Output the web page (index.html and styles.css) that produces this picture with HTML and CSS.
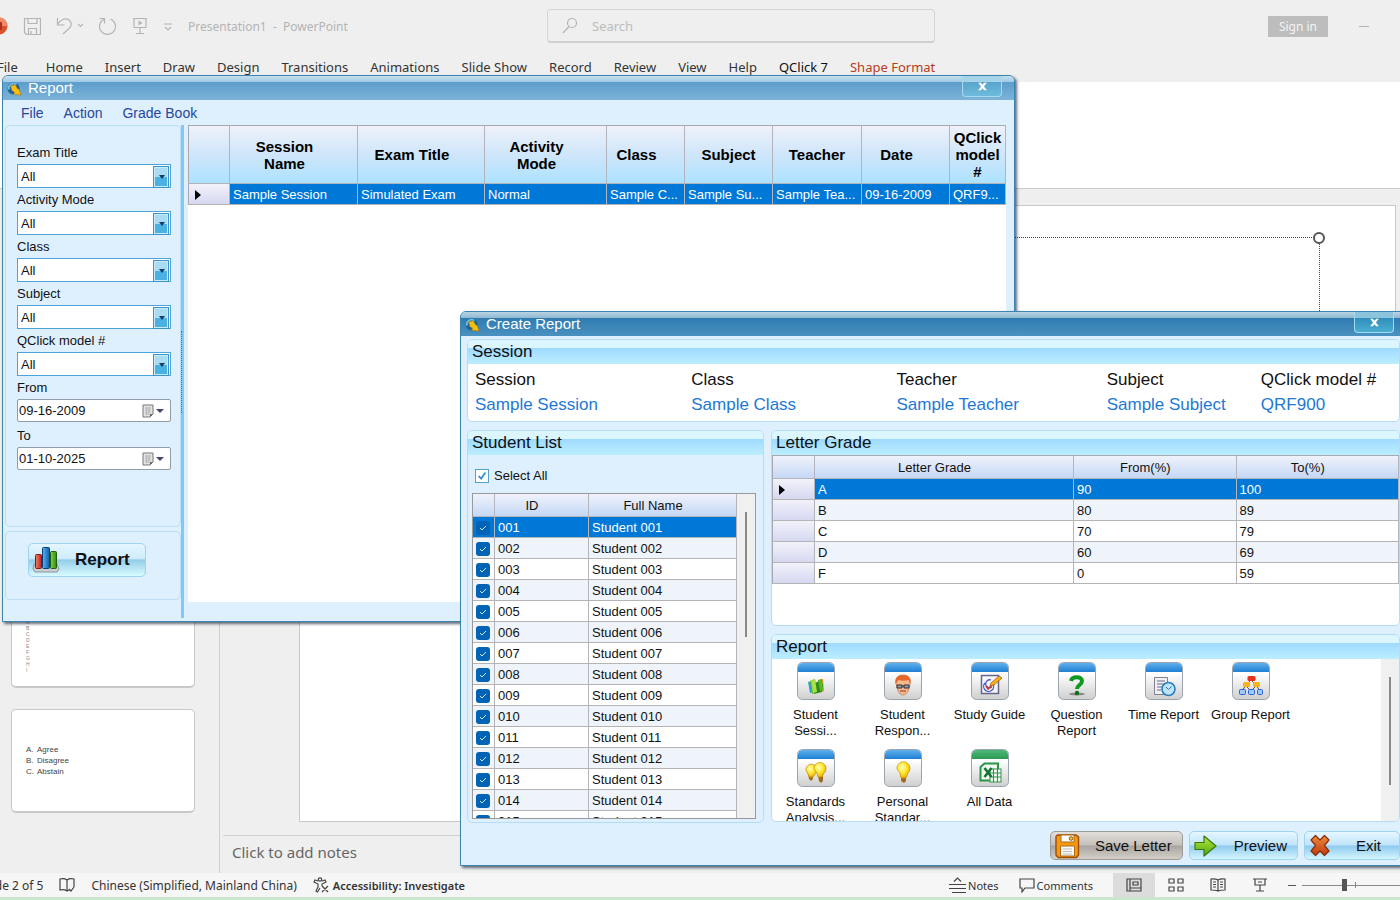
FILE: index.html
```html
<!DOCTYPE html>
<html lang="en">
<head>
    <meta charset="UTF-8">
    <meta name="viewport" content="width=device-width, initial-scale=1.0">
    <title>Create Report</title>
    <link rel="stylesheet" href="styles.css">
</head>
<body>

    <!-- shared icon parts -->
    <svg width="0" height="0" class="defs" aria-hidden="true">
        <defs>
            <linearGradient id="blue-top" x1="0" y1="0" x2="0" y2="1"><stop offset="0" stop-color="#5fb0ee"/><stop offset="1" stop-color="#1f7fd2"/></linearGradient>
            <linearGradient id="green-top" x1="0" y1="0" x2="0" y2="1"><stop offset="0" stop-color="#4fb878"/><stop offset="1" stop-color="#2b9a55"/></linearGradient>
            <linearGradient id="tile" x1="0" y1="0" x2="0" y2="1"><stop offset="0.3" stop-color="#ffffff"/><stop offset="1" stop-color="#cfcfcf"/></linearGradient>
            <linearGradient id="red-bar"><stop offset="0" stop-color="#f0806c"/><stop offset="1" stop-color="#b8261a"/></linearGradient>
            <linearGradient id="blue-bar"><stop offset="0" stop-color="#5ab4f4"/><stop offset="1" stop-color="#0f5cae"/></linearGradient>
            <linearGradient id="green-bar"><stop offset="0" stop-color="#8ad04c"/><stop offset="1" stop-color="#2c8812"/></linearGradient>
            <linearGradient id="arrow-fill" x1="0" y1="0" x2="0" y2="1"><stop offset="0" stop-color="#b9ec3c"/><stop offset="1" stop-color="#4fa512"/></linearGradient>
            <linearGradient id="exit-fill" x1="0" y1="0" x2="0" y2="1"><stop offset="0" stop-color="#f08a3c"/><stop offset="1" stop-color="#bf3c10"/></linearGradient>
            <radialGradient id="bulb" cx="0.4" cy="0.35" r="0.7"><stop offset="0" stop-color="#fffbc0"/><stop offset="0.5" stop-color="#ffe92e"/><stop offset="1" stop-color="#f0a800"/></radialGradient>
            <symbol id="app" viewBox="0 0 16 16">
                <circle cx="7" cy="8" r="6.5" fill="#1f6496"/>
                <path d="M2 9a5 5 0 0 1 8-5" fill="none" stroke="#6cc0e8" stroke-width="2"/>
                <path d="M4 5l5-1 2 4 2 1 2 6-8-1 1-2-3-2z" fill="#f6bf12" stroke="#a87408" stroke-width="0.6"/>
            </symbol>
            <symbol id="close" viewBox="0 0 10 10"><path d="M1 1.500h2.500L5 3.500l1.500-2H9L6.300 5 9 8.500H6.500L5 6.500l-1.500 2H1L3.700 5z" fill="#fff"/></symbol>
            <symbol id="calendar" viewBox="0 0 12 14">
                <path d="M1 1h10v9l-3 3H1z" fill="#e4e4e4" stroke="#777"/>
                <path d="M3 4h6M3 6h6M3 8h6M3 10h4M4.500 3v8M7 3v8" stroke="#aaa" stroke-width="0.7"/>
                <path d="M11 10H8v3z" fill="#666"/>
            </symbol>
            <symbol id="tile-blue" viewBox="0 0 38 38">
                <rect x="0.500" y="0.500" width="37" height="37" rx="5" fill="url(#tile)" stroke="#9aa4ae"/>
                <path d="M1 10V5.500A4.500 4.500 0 0 1 5.500 1h27A4.500 4.500 0 0 1 37 5.500V10z" fill="url(#blue-top)"/>
            </symbol>
        </defs>
    </svg>

    <div class="powerpoint">
        <header class="titlebar">
            <div class="quick-access">
                <svg class="logo" width="17" height="18" viewBox="0 0 17 18"><circle cx="8" cy="9" r="8.500" fill="#d9532c"/><path d="M8 .5a8.500 8.500 0 0 1 8.500 8.500H8z" fill="#f08a68"/><rect x="2" y="5" width="9" height="8" rx="1" fill="#a9321a"/></svg>
                <svg width="18" height="18" viewBox="0 0 18 18"><path d="M1.500 1.500h16v16h-14l-2-2zM5 1.500v5h9v-5M5.500 17.500v-6h8v6M8 17v-3" class="ink-pale"/></svg>
                <svg width="28" height="18" viewBox="0 0 28 18"><path d="M1.500 1v7h7M1.500 7.500C5 2 10 .5 13 3s3 6 0 8.500L7 17" class="ink-pale"/><path d="M22 7l2.500 2.500L27 7" class="ink-pale"/></svg>
                <svg width="18" height="18" viewBox="0 0 18 18"><path d="M0.500 1.500h5v5M5.500 2a8 8 0 1 0 6 0" class="ink-pale"/></svg>
                <svg width="16" height="18" viewBox="0 0 16 18"><path d="M1 1.500h14M2 1.500v9h12v-9M8 10.500v6M4 16.500h8" class="ink-pale"/><path d="M6.500 3.500v5l4-2.500z" fill="#b4b4b4"/></svg>
                <svg width="10" height="18" viewBox="0 0 10 18"><path d="M1 7h8M2 10l3 3 3-3" class="ink-pale"/></svg>
                <span class="doc-name">Presentation1 &nbsp;-&nbsp; PowerPoint</span>
            </div>
            <label class="search">
                <svg width="16" height="17" viewBox="0 0 16 17"><circle cx="10" cy="6" r="4.500" class="ink-pale"/><path d="M7 9.500L1 16" class="ink-pale"/></svg>
                <input type="text" placeholder="Search" aria-label="Search">
            </label>
            <div class="account">
                <button type="button" class="sign-in">Sign in</button>
                <button type="button" class="minimize" aria-label="Minimize"></button>
            </div>
        </header>

        <nav class="ribbon-tabs">
            <a href="#" class="file-tab">File</a>
            <a href="#">Home</a>
            <a href="#">Insert</a>
            <a href="#">Draw</a>
            <a href="#">Design</a>
            <a href="#">Transitions</a>
            <a href="#">Animations</a>
            <a href="#">Slide Show</a>
            <a href="#">Record</a>
            <a href="#">Review</a>
            <a href="#">View</a>
            <a href="#">Help</a>
            <a href="#" class="current">QClick 7</a>
            <a href="#" class="contextual">Shape Format</a>
        </nav>
        <div class="ribbon"></div>

        <div class="workspace">
            <div class="thumbnails">
                <div class="thumb">
                    <ul class="tiny">
                        <li>A</li><li>B</li><li>C</li><li>D</li><li>E</li><li>F</li><li>G</li><li>H</li><li>I</li>
                    </ul>
                </div>
                <div class="thumb">
                    <ul>
                        <li><span>A.</span>Agree</li>
                        <li><span>B.</span>Disagree</li>
                        <li><span>C.</span>Abstain</li>
                    </ul>
                </div>
            </div>
            <div class="editor">
                <div class="slide">
                    <div class="placeholder"><span class="handle"></span></div>
                </div>
                <div class="notes">Click to add notes</div>
            </div>
        </div>

        <footer class="statusbar">
            <div class="status-left">
                <span class="slide-count">Slide 2 of 5</span>
                <svg width="16" height="16" viewBox="0 0 16 16"><path d="M8 3C6 1.500 3 1.500 1 2v11c2-.5 5-.5 7 1 1-.8 2-1 3-1M8 3c2-1.500 5-1.500 7-1v8M8 3v11M10 12l2 2 3-4" class="ink"/></svg>
                <span class="language">Chinese (Simplified, Mainland China)</span>
                <span class="access"><svg width="16" height="16" viewBox="0 0 16 16"><circle cx="7" cy="2.500" r="1.700" class="ink"/><path d="M5 4L2 3 1 5l4 2v3l-2 4 1.500 1L7 11M9 4l3-1 1 2-4 2v2M9 9l6 6M15 9l-6 6" class="ink"/></svg><b>Accessibility: Investigate</b></span>
            </div>
            <div class="status-right">
                <button type="button" class="status-btn"><svg width="17" height="17" viewBox="0 0 17 17"><path d="M5 4.500L8.500 1 12 4.500M0 7.500h17M0 11.500h17M3 15.500h14" class="ink"/></svg>Notes</button>
                <button type="button" class="status-btn"><svg width="16" height="15" viewBox="0 0 16 15"><path d="M1 1h14v9H6l-3 4v-4H1z" class="ink"/></svg>Comments</button>
                <div class="views">
                    <button type="button" class="active" aria-label="Normal view"><svg width="16" height="14" viewBox="0 0 16 14"><path d="M1 1h14v12H1zM4 1v12M4 10h11M7 4h5v3H7z" class="ink"/></svg></button>
                    <button type="button" aria-label="Slide sorter"><svg width="16" height="14" viewBox="0 0 16 14"><path d="M1 1h5v4H1zM10 1h5v4h-5zM1 9h5v4H1zM10 9h5v4h-5z" class="ink"/></svg></button>
                    <button type="button" aria-label="Reading view"><svg width="16" height="14" viewBox="0 0 16 14"><path d="M8 2C6 .8 3 .8 1 1v11c2 0 5 0 7 1 2-1 5-1 7-1V1c-2-.2-5-.2-7 1zM8 2v11M3 4h3M3 6.500h3M3 9h3M10 4h3M10 6.500h3M10 9h3" class="ink"/></svg></button>
                    <button type="button" aria-label="Slide show"><svg width="14" height="14" viewBox="0 0 14 14"><path d="M0 1h14M2 1v6h10V1M7 7v6M3 13h8M5 4h4" class="ink"/></svg></button>
                </div>
                <button type="button" class="zoom-out" aria-label="Zoom out"></button>
                <input type="range" class="zoom" min="0" max="100" value="43" aria-label="Zoom">
            </div>
        </footer>
    </div>

    <section class="window report-window">
        <div class="window-title">
            <svg width="15" height="15"><use href="#app"/></svg>
            <h1>Report</h1>
            <button type="button" class="close" aria-label="Close"><svg width="11" height="11"><use href="#close"/></svg></button>
        </div>
        <nav class="menu">
            <a href="#">File</a>
            <a href="#">Action</a>
            <a href="#">Grade Book</a>
        </nav>
        <div class="report-body">
            <aside class="sidebar">
                <form class="filters">
                    <label for="exam-title">Exam Title</label>
                    <div class="combo"><select id="exam-title"><option>All</option></select></div>
                    <label for="activity-mode">Activity Mode</label>
                    <div class="combo"><select id="activity-mode"><option>All</option></select></div>
                    <label for="class">Class</label>
                    <div class="combo"><select id="class"><option>All</option></select></div>
                    <label for="subject">Subject</label>
                    <div class="combo"><select id="subject"><option>All</option></select></div>
                    <label for="model">QClick model #</label>
                    <div class="combo"><select id="model"><option>All</option></select></div>
                    <label for="from">From</label>
                    <div class="date-box"><input type="text" id="from" value="09-16-2009"><button type="button" aria-label="Pick start date"><svg width="12" height="14"><use href="#calendar"/></svg><span class="caret"></span></button></div>
                    <label for="to">To</label>
                    <div class="date-box"><input type="text" id="to" value="01-10-2025"><button type="button" aria-label="Pick end date"><svg width="12" height="14"><use href="#calendar"/></svg><span class="caret"></span></button></div>
                </form>
                <div class="sidebar-actions">
                    <button type="button" class="glass report-btn">
                        <svg width="28" height="26" viewBox="0 0 28 26">
                            <path d="M2 17h23l2 5-2 3H3l-2-3z" fill="#c9cfd2" stroke="#777" stroke-width="0.700"/>
                            <rect x="3.500" y="7.500" width="6" height="14" rx="1" fill="url(#red-bar)" stroke="#821a10"/>
                            <rect x="10.500" y="0.500" width="7" height="21" rx="1" fill="url(#blue-bar)" stroke="#0a3c78"/>
                            <rect x="18.500" y="4.500" width="6" height="17" rx="1" fill="url(#green-bar)" stroke="#1e600a"/>
                        </svg>
                        <span>Report</span>
                    </button>
                </div>
            </aside>
            <div class="splitter"><span></span></div>
            <div class="grid-area">
                <table class="sessions">
                    <colgroup><col class="w-mark"><col class="w-name"><col class="w-exam"><col class="w-mode"><col class="w-class"><col class="w-subject"><col class="w-teacher"><col class="w-date"><col></colgroup>
                    <thead>
                        <tr>
                            <th></th>
                            <th class="sortable">Session<br>Name</th>
                            <th class="sortable">Exam Title</th>
                            <th class="sortable">Activity<br>Mode</th>
                            <th class="sortable">Class</th>
                            <th>Subject</th>
                            <th>Teacher</th>
                            <th class="sortable">Date</th>
                            <th>QClick<br>model<br>#</th>
                        </tr>
                    </thead>
                    <tbody>
                        <tr class="selected">
                            <td class="mark"><span class="pointer"></span></td>
                            <td>Sample Session</td>
                            <td>Simulated Exam</td>
                            <td>Normal</td>
                            <td>Sample C...</td>
                            <td>Sample Su...</td>
                            <td>Sample Tea...</td>
                            <td>09-16-2009</td>
                            <td>QRF9...</td>
                        </tr>
                    </tbody>
                </table>
            </div>
        </div>
    </section>

    <section class="window create-window">
        <div class="window-title">
            <svg width="15" height="15"><use href="#app"/></svg>
            <h1>Create Report</h1>
            <button type="button" class="close" aria-label="Close"><svg width="11" height="11"><use href="#close"/></svg></button>
        </div>
        <div class="create-body">
            <div class="panel session-panel">
                <h2>Session</h2>
                <dl class="session-info">
                    <div><dt>Session</dt><dd>Sample Session</dd></div>
                    <div><dt>Class</dt><dd>Sample Class</dd></div>
                    <div><dt>Teacher</dt><dd>Sample Teacher</dd></div>
                    <div><dt>Subject</dt><dd>Sample Subject</dd></div>
                    <div><dt>QClick model #</dt><dd>QRF900</dd></div>
                </dl>
            </div>

            <div class="columns">
                <div class="panel student-panel">
                    <h2>Student List</h2>
                    <label class="select-all"><input type="checkbox" checked>Select All</label>
                    <div class="student-scroll">
                        <table class="data-table">
                            <colgroup><col class="w-check"><col class="w-id"><col></colgroup>
                            <thead><tr><th></th><th>ID</th><th>Full Name</th></tr></thead>
                            <tbody>
                                <tr class="selected"><td><input type="checkbox" aria-label="Student 001" checked></td><td>001</td><td>Student 001</td></tr>
                                <tr><td><input type="checkbox" aria-label="Student 002" checked></td><td>002</td><td>Student 002</td></tr>
                                <tr><td><input type="checkbox" aria-label="Student 003" checked></td><td>003</td><td>Student 003</td></tr>
                                <tr><td><input type="checkbox" aria-label="Student 004" checked></td><td>004</td><td>Student 004</td></tr>
                                <tr><td><input type="checkbox" aria-label="Student 005" checked></td><td>005</td><td>Student 005</td></tr>
                                <tr><td><input type="checkbox" aria-label="Student 006" checked></td><td>006</td><td>Student 006</td></tr>
                                <tr><td><input type="checkbox" aria-label="Student 007" checked></td><td>007</td><td>Student 007</td></tr>
                                <tr><td><input type="checkbox" aria-label="Student 008" checked></td><td>008</td><td>Student 008</td></tr>
                                <tr><td><input type="checkbox" aria-label="Student 009" checked></td><td>009</td><td>Student 009</td></tr>
                                <tr><td><input type="checkbox" aria-label="Student 010" checked></td><td>010</td><td>Student 010</td></tr>
                                <tr><td><input type="checkbox" aria-label="Student 011" checked></td><td>011</td><td>Student 011</td></tr>
                                <tr><td><input type="checkbox" aria-label="Student 012" checked></td><td>012</td><td>Student 012</td></tr>
                                <tr><td><input type="checkbox" aria-label="Student 013" checked></td><td>013</td><td>Student 013</td></tr>
                                <tr><td><input type="checkbox" aria-label="Student 014" checked></td><td>014</td><td>Student 014</td></tr>
                                <tr><td><input type="checkbox" aria-label="Student 015" checked></td><td>015</td><td>Student 015</td></tr>
                            </tbody>
                        </table>
                        <div class="scrollbar"><span class="student-thumb"></span></div>
                    </div>
                </div>

                <div class="right-column">
                    <div class="panel grade-panel">
                        <h2>Letter Grade</h2>
                        <table class="data-table">
                            <colgroup><col class="w-mark"><col class="w-grade"><col><col></colgroup>
                            <thead><tr><th></th><th>Letter Grade</th><th>From(%)</th><th>To(%)</th></tr></thead>
                            <tbody>
                                <tr class="selected"><td class="mark"><span class="pointer"></span></td><td>A</td><td>90</td><td>100</td></tr>
                                <tr><td class="mark"></td><td>B</td><td>80</td><td>89</td></tr>
                                <tr><td class="mark"></td><td>C</td><td>70</td><td>79</td></tr>
                                <tr><td class="mark"></td><td>D</td><td>60</td><td>69</td></tr>
                                <tr><td class="mark"></td><td>F</td><td>0</td><td>59</td></tr>
                            </tbody>
                        </table>
                    </div>

                    <div class="panel reports-panel">
                        <h2>Report</h2>
                        <div class="reports-scroll">
                            <div class="report-list">
                                <button type="button">
                                    <svg width="38" height="38" viewBox="0 0 38 38"><use href="#tile-blue"/><path d="M11 20l4-1 1 11-3 1z" fill="#2f9fd8"/><path d="M21 18l5-1 1 12-4 1z" fill="#f08a2c"/><path d="M13 19l5-2 2 13-5 2z" fill="#5cba1e"/><path d="M18 21l4-2 4 3-1 8-8 2z" fill="#2e8a1a"/><path d="M14 19l4-2 2 13-4 1z" fill="#a6e04a"/><path d="M21 18l4-1 1 11-3 1z" fill="#58b824"/></svg>
                                    <span>Student<br>Sessi...</span>
                                </button>
                                <button type="button">
                                    <svg width="38" height="38" viewBox="0 0 38 38"><use href="#tile-blue"/><path d="M12 20c0-5 3-7 7-7s8 2 7 8c0 6-3 12-7 12s-6-5-7-13z" fill="#f3b98e" stroke="#b0663a" stroke-width="0.600"/><path d="M11.500 22c-1-6 2-9 7.500-9s8.500 3 7.500 9l-2-4c-3 1-7 1-10 0z" fill="#e8682a"/><path d="M13 23h5v3h-5zM20 23h5v3h-5zM18 24h2" fill="#8ea0b4" stroke="#3c2a28"/><path d="M16 29h6" stroke="#a03020" stroke-width="1.200"/></svg>
                                    <span>Student<br>Respon...</span>
                                </button>
                                <button type="button">
                                    <svg width="38" height="38" viewBox="0 0 38 38"><use href="#tile-blue"/><rect x="10.500" y="13.500" width="17" height="18" fill="#f4f4fa" stroke="#66668c" stroke-width="1.500"/><path d="M14 21a5 5 0 1 0 8 1M20 18a4 4 0 1 0 1 7" fill="none" stroke="#4a5ac0" stroke-width="1.300"/><path d="M15 24l2 3 7-7" fill="none" stroke="#d8342c" stroke-width="1.600"/><path d="M19 24l1-3 8-7 3 2-8 7z" fill="#f8b020" stroke="#a05c10" stroke-width="0.800"/></svg>
                                    <span>Study Guide</span>
                                </button>
                                <button type="button">
                                    <svg width="38" height="38" viewBox="0 0 38 38"><use href="#tile-blue"/><ellipse cx="19" cy="32" rx="8" ry="1.500" fill="#888"/><path d="M13 19c1-5 11-5 11 0 0 4-5 4-5 8" fill="none" stroke="#0d9a20" stroke-width="4"/><circle cx="19" cy="31" r="2.200" fill="#067016"/></svg>
                                    <span>Question<br>Report</span>
                                </button>
                                <button type="button">
                                    <svg width="38" height="38" viewBox="0 0 38 38"><use href="#tile-blue"/><path d="M9.500 15.500h13v17h-13z" fill="#f0f0f4" stroke="#80808c"/><path d="M12 19h8M12 22h8M12 25h5M12 28h4" stroke="#6a6a88"/><circle cx="23.500" cy="27" r="6.500" fill="#bfe4fa" stroke="#2a7fc0" stroke-width="1.600"/><path d="M21 25l2.500 2.500 3-3" fill="none" stroke="#2a6fb0"/></svg>
                                    <span>Time Report</span>
                                </button>
                                <button type="button">
                                    <svg width="38" height="38" viewBox="0 0 38 38"><use href="#tile-blue"/><path d="M19 18l-5 5-4 6M19 18l5 5 4 6M14 24l5 5 5-5" fill="none" stroke="#555"/><rect x="15.500" y="14" width="8" height="5" rx="1.500" fill="#e8321c"/><rect x="11" y="20" width="7" height="5" rx="1.500" fill="#f8b418"/><rect x="21" y="20" width="7" height="5" rx="1.500" fill="#f8b418"/><g fill="#9cc8fa" stroke="#2c62d0"><rect x="7.500" y="27.500" width="6" height="5" rx="1"/><rect x="16.500" y="27.500" width="6" height="5" rx="1"/><rect x="25.500" y="27.500" width="5" height="5" rx="1"/></g></svg>
                                    <span>Group Report</span>
                                </button>
                                <button type="button">
                                    <svg width="38" height="38" viewBox="0 0 38 38"><use href="#tile-blue"/><path d="M11 25h5v5l-2 2-2-2z" fill="#a07020"/><path d="M9 21a5.500 5.500 0 1 1 9 4l-2 3h-4l-1-3z" fill="url(#bulb)" stroke="#c08a00" stroke-width="0.700"/><path d="M21 27h5v5l-2 2-2-2z" fill="#a06a20"/><path d="M17 20a6 6 0 1 1 10 4l-2 4h-4l-1-4z" fill="url(#bulb)" stroke="#c08a00" stroke-width="0.700"/></svg>
                                    <span>Standards<br>Analysis...</span>
                                </button>
                                <button type="button">
                                    <svg width="38" height="38" viewBox="0 0 38 38"><use href="#tile-blue"/><path d="M17 28h5v4l-2 2-3-2z" fill="#a06a20"/><path d="M13 20a6.500 6.500 0 1 1 11 4l-2 5h-5l-1-5z" fill="url(#bulb)" stroke="#c08a00" stroke-width="0.700"/></svg>
                                    <span>Personal<br>Standar...</span>
                                </button>
                                <button type="button">
                                    <svg width="38" height="38" viewBox="0 0 38 38"><rect x="0.500" y="0.500" width="37" height="37" rx="5" fill="url(#tile)" stroke="#9aa4ae"/><path d="M1 10V5.500A4.500 4.500 0 0 1 5.500 1h27A4.500 4.500 0 0 1 37 5.500V10z" fill="url(#green-top)"/><path d="M9.500 18l4-3.500H27v17H9.500z" fill="#eef8ee" stroke="#2a9448" stroke-width="2"/><rect x="19" y="20" width="11" height="13" fill="#fff" stroke="#2a9448"/><path d="M22.500 20v13M26.500 20v13M19 24h11M19 28h11" stroke="#2a9448" stroke-width="1.200"/><path d="M13.500 19l7 9M20.500 19l-7 9" stroke="#147030" stroke-width="2.500"/></svg>
                                    <span>All Data</span>
                                </button>
                            </div>
                            <div class="scrollbar"><span class="report-thumb"></span></div>
                        </div>
                    </div>
                </div>
            </div>

            <div class="buttons">
                <button type="button" class="glass save">
                    <svg width="26" height="26" viewBox="0 0 26 26"><path d="M2 3.500L3.500 2H22l2.500 2v18l-2 2.500H4L2 22z" fill="#f39a12" stroke="#a04c08" stroke-width="1.400"/><path d="M7 2h13v7H7z" fill="#fff" stroke="#b06a10"/><circle cx="17" cy="5.500" r="1.800" fill="#f8c440" stroke="#8a5a10"/><path d="M6.500 13h14v10h-14z" fill="#fafafa" stroke="#b06a10"/><path d="M9 16h9M9 18.500h9M9 21h9" stroke="#bbb"/></svg>
                    <span>Save Letter</span>
                </button>
                <button type="button" class="glass">
                    <svg width="26" height="26" viewBox="0 0 26 26"><path d="M2 9.500h9V3l12 10-12 10v-6.500H2z" fill="url(#arrow-fill)" stroke="#3a780c" stroke-width="1.200" stroke-linejoin="round"/></svg>
                    <span>Preview</span>
                </button>
                <button type="button" class="glass exit">
                    <svg width="26" height="26" viewBox="0 0 26 26"><path d="M3 7l4.500-4.500L12 7l4.500-4.500L21 7l-4.500 5.500L21 18l-4.500 4.500L12 18l-4.500 4.500L3 18l4.500-5.500z" fill="url(#exit-fill)" stroke="#8a2c0a" stroke-width="1.200" stroke-linejoin="round"/></svg>
                    <span>Exit</span>
                </button>
            </div>
        </div>
    </section>

</body>
</html>
```

FILE: styles.css
```css
* {
    box-sizing: border-box;
}

body {
    margin: 0;
    height: 100vh;
    overflow: hidden;
    position: relative;
    font-family: "Liberation Sans", Arial, sans-serif;
    font-size: 13px;
    color: #111;
}

button, input, select {
    font: inherit;
    color: inherit;
    margin: 0;
}

button {
    padding: 0;
    border: none;
    background: none;
}

a {
    color: inherit;
    text-decoration: none;
}

h1, h2, ul, dl, dd {
    margin: 0;
    padding: 0;
    font-weight: normal;
}

svg {
    flex: none;
}

.defs {
    position: absolute;
}

.ink, .ink-pale {
    fill: none;
    stroke: #444;
    stroke-width: 1.2;
}

.ink-pale {
    stroke: #b4b4b4;
}

/* ---------- PowerPoint in the background ---------- */

.powerpoint {
    display: flex;
    flex-direction: column;
    height: 100%;
    background: #efefef;
    font-family: "Noto Sans", "Open Sans", sans-serif;
    font-size: 12px;
    border-bottom: 3px solid #cbe6cd;
}

.titlebar {
    display: flex;
    align-items: center;
    height: 52px;
    color: #b4b4b4;
}

.quick-access {
    display: flex;
    flex: 0 0 547px;
    align-items: center;
    gap: 15px;
}

.logo {
    margin-left: -9px;
}

.search {
    display: flex;
    flex: 0 1 388px;
    align-items: center;
    gap: 14px;
    height: 34px;
    padding: 0 14px;
    border: 1px solid #d4d4d4;
    border-bottom: 2px solid #cfcfcf;
    border-radius: 4px;
    font-size: 13px;
}

.search input {
    flex: 1;
    border: none;
    background: none;
    padding: 0;
}

.search input::placeholder {
    color: #bcbcbc;
}

.account {
    display: flex;
    align-items: center;
    gap: 31px;
    margin-left: auto;
    padding-right: 31px;
}

.sign-in {
    padding: 2px 11px;
    line-height: 17px;
    background: #bdbdbd;
    color: #f4f4f4;
}

.minimize {
    width: 10px;
    height: 1px;
    background: #b4b4b4;
}

.ribbon-tabs {
    display: flex;
    gap: 22px;
    height: 30px;
    padding-top: 5px;
    margin-left: -3px;
    font-size: 13px;
    line-height: 20px;
    color: #333;
    white-space: nowrap;
}

.ribbon-tabs .file-tab {
    padding-right: 6px;
}

.ribbon-tabs .current {
    color: #111;
}

.ribbon-tabs .contextual {
    color: #b83b1d;
}

.ribbon {
    height: 107px;
    background: #fff;
    border-bottom: 1px solid #cacaca;
}

.workspace {
    display: flex;
    flex: 1;
    min-height: 0;
}

.thumbnails {
    display: flex;
    flex-direction: column;
    justify-content: flex-end;
    gap: 21px;
    width: 220px;
    padding: 0 24px 60px 11px;
    border-right: 1px solid #cfcfcf;
}

.thumb {
    height: 104px;
    padding: 34px 0 0 14px;
    background: #fff;
    border: 1px solid #c8c8c8;
    border-bottom-width: 2px;
    border-radius: 5px;
    font-family: "Liberation Sans", Arial, sans-serif;
    font-size: 8px;
    line-height: 11px;
    color: #444;
}

.thumb ul {
    list-style: none;
}

.thumb span {
    display: inline-block;
    width: 11px;
}

.thumb .tiny {
    font-size: 5px;
    line-height: 6px;
    color: #888;
}

.editor {
    display: flex;
    flex: 1;
    flex-direction: column;
    padding: 16px 4px 0 3px;
}

.slide {
    position: relative;
    flex: 1;
    margin-left: 76px;
    background: #fff;
    border: 1px solid #c8c8c8;
}

.placeholder {
    position: absolute;
    left: 76px;
    right: 75px;
    top: 31px;
    height: 200px;
    border: 1px dotted #444;
}

.handle {
    position: absolute;
    right: -6px;
    top: -6px;
    width: 12px;
    height: 12px;
    border: 2px solid #555;
    border-radius: 50%;
    background: #fff;
}

.notes {
    margin-top: 13px;
    padding: 5px 9px 9px;
    border-top: 1px solid #cfcfcf;
    font-size: 15px;
    line-height: 23px;
    color: #666;
}

.statusbar {
    display: flex;
    align-items: center;
    justify-content: space-between;
    height: 24px;
    background: #f6f6f6;
    font-size: 11px;
    color: #333;
    white-space: nowrap;
}

.status-left, .status-right, .access, .status-btn, .views {
    display: flex;
    align-items: center;
}

.status-left {
    gap: 16px;
    font-size: 12px;
}

.slide-count {
    margin-left: -18px;
}

.access {
    gap: 4px;
    font-size: 11px;
}

.access b {
    font-weight: 600;
}

.status-right {
    align-self: stretch;
}

.status-btn {
    gap: 2px;
    margin-right: 20px;
}

.views {
    align-self: stretch;
}

.views button {
    display: flex;
    align-items: center;
    justify-content: center;
    width: 42px;
    height: 100%;
}

.views .active {
    background: #dcdcdc;
}

.zoom-out {
    width: 8px;
    height: 1px;
    margin: 0 6px 0 7px;
    background: #555;
}

.zoom {
    appearance: none;
    width: 98px;
    height: 12px;
    background: linear-gradient(#888, #888) 53px 50% / 1px 6px no-repeat, linear-gradient(#888, #888) 0 50% / 100% 1px no-repeat;
}

.zoom::-webkit-slider-thumb {
    appearance: none;
    width: 5px;
    height: 12px;
    background: #555;
}

/* ---------- dialog windows ---------- */

.window {
    position: absolute;
    display: flex;
    flex-direction: column;
    background: #def0fe;
    border: 1px solid #3c85b0;
    border-radius: 6px 6px 0 0;
    box-shadow: 2px 2px 3px rgba(20, 30, 50, 0.65);
}

.report-window {
    left: 2px;
    right: 385px;
    top: 75px;
    bottom: 278px;
}

.create-window {
    left: 460px;
    right: -7px;
    top: 311px;
    bottom: 34px;
}

.window-title {
    display: flex;
    flex: none;
    align-items: center;
    gap: 6px;
    height: 24px;
    padding: 0 12px 0 4px;
    border-radius: 5px 5px 0 0;
    background: linear-gradient(#c4deec, #9fcbe4 6px, #5d9dcc 6px, #7cb3d8);
    color: #fff;
}

.create-window .window-title {
    background: linear-gradient(#b9d4e2, #8fb9d2 6px, #2f7bb0 6px, #4a91c0);
}

.window-title h1 {
    font-size: 15px;
    line-height: 24px;
}

.close {
    display: flex;
    align-items: center;
    justify-content: center;
    align-self: flex-start;
    width: 40px;
    height: 21px;
    margin-left: auto;
    border: 1px solid #a4d9ee;
    border-top: none;
    border-radius: 0 0 4px 4px;
    background: linear-gradient(#a8d4ea 6px, #5ba4cc 6px, #6cbbdc);
}

.create-window .close {
    background: linear-gradient(#8cc4de 6px, #2f8ebc 6px, #4aaed2);
}

.menu {
    display: flex;
    flex: none;
    gap: 20px;
    height: 25px;
    padding-left: 18px;
    font-size: 14px;
    line-height: 26px;
    color: #2747a0;
}

.report-body {
    display: flex;
    flex: 1;
    min-height: 0;
    padding: 0 8px 3px 2px;
}

.sidebar {
    display: flex;
    flex-direction: column;
    gap: 4px;
    width: 176px;
    padding-bottom: 18px;
}

.filters, .sidebar-actions {
    border: 1px solid #b9def6;
    border-radius: 5px;
}

.filters {
    flex: 1;
    padding: 16px 9px 0 11px;
}

.filters label {
    display: block;
    line-height: 22px;
}

.combo, .date-box {
    position: relative;
    display: flex;
    height: 24px;
    margin-bottom: 1px;
    background: #fff;
    border: 1px solid #4ba3d8;
}

.combo select {
    appearance: none;
    flex: 1;
    padding: 0 3px;
    border: none;
    background: none;
}

/* drop-down button drawn over the select */
.combo::after {
    content: "";
    position: absolute;
    right: 1px;
    top: 1px;
    width: 14px;
    height: 20px;
    border: 1px solid #3d94c8;
    box-shadow: inset 0 0 0 1px #c8ebfa;
    background: linear-gradient(#a9dbf3 50%, #4bb0e2 50%);
    pointer-events: none;
}

.combo::before {
    content: "";
    position: absolute;
    z-index: 1;
    right: 5px;
    top: 10px;
    border: 3px solid transparent;
    border-top: 4px solid #143c64;
    border-bottom: none;
    pointer-events: none;
}

.date-box {
    height: 23px;
    margin-bottom: 3px;
    border: 1px solid #929ca6;
    border-radius: 2px;
}

.date-box input {
    flex: 1;
    min-width: 0;
    padding: 0 1px;
    border: none;
    background: none;
}

.date-box button {
    display: flex;
    align-items: center;
    gap: 2px;
    margin-right: 6px;
}

.caret {
    border: 4px solid transparent;
    border-top: 4px solid #44446c;
    border-bottom: none;
}

.sidebar-actions {
    padding: 11px 22px 22px;
}

.glass {
    display: flex;
    align-items: center;
    border: 1px solid #9fd3f0;
    border-radius: 5px;
    background: linear-gradient(#e6f7ff, #bfe4fa 48%, #8fcaee 52%, #d4f6ff);
}

.report-btn {
    gap: 15px;
    width: 118px;
    height: 34px;
    padding-left: 3px;
    font-size: 17px;
    font-weight: bold;
    background: linear-gradient(#e4f6ff, #d0ecfb 45%, #94cde8 50%, #d8fbff);
}

.splitter {
    display: flex;
    align-items: center;
    width: 3px;
    margin-right: 4px;
    background: #7fc8f8;
}

.splitter span {
    height: 82px;
    border-left: 1px dotted #2c78b8;
}

.grid-area {
    flex: 1;
    min-width: 0;
    margin-bottom: 16px;
    background: #fff;
}

table {
    width: 100%;
    table-layout: fixed;
    border-spacing: 0;
}

th, td {
    overflow: hidden;
    padding: 0;
    white-space: nowrap;
    border-right: 1px solid #b4b4bc;
    border-bottom: 1px solid #b4b4b4;
}

td {
    height: 21px;
    padding: 2px 3px 0;
    line-height: 18px;
    text-align: left;
}

.selected td {
    background: #0078d7;
    color: #fff;
}

td.mark, .selected td.mark {
    background: linear-gradient(#f2f2fb, #d6d8f0);
}

.pointer {
    display: block;
    width: 6px;
    margin-left: 3px;
    border: 5px solid transparent;
    border-left: 6px solid #000;
    border-right: none;
}

.sessions th {
    height: 59px;
    background: linear-gradient(#eff1fa, #cfe6fa 50%, #ace2ff);
    border-top: 1px solid #a8a8b0;
    font-size: 15px;
    line-height: 17px;
    white-space: normal;
    color: #000;
}

.sessions th.sortable {
    padding-right: 18px;
}

.sessions tr > :first-child {
    border-left: 1px solid #a8a8b0;
}

.w-mark { width: 42px; }
.w-name { width: 128px; }
.w-exam { width: 127px; }
.w-mode { width: 122px; }
.w-class { width: 78px; }
.w-subject { width: 88px; }
.w-teacher { width: 89px; }
.w-date { width: 88px; }
.w-check { width: 22px; }
.w-id { width: 94px; }
.w-grade { width: 259px; }

/* ---------- create report ---------- */

.create-body {
    display: flex;
    flex: 1;
    flex-direction: column;
    min-height: 0;
    padding: 3px 6px 5px;
}

.panel {
    display: flex;
    flex-direction: column;
    overflow: hidden;
    border: 1px solid #b5dcf6;
    border-radius: 5px;
    background: #fff;
}

.panel h2 {
    flex: none;
    padding-left: 4px;
    font-size: 17px;
    line-height: 24px;
    background: linear-gradient(#dcf6ff 8px, #9edaff 8px, #bdeeff);
}

.session-panel {
    flex: none;
    margin-bottom: 8px;
}

.session-info {
    display: grid;
    grid-template-columns: 216fr 205fr 210fr 154fr 138fr;
    padding: 3px 0 4px 7px;
    font-size: 17px;
    line-height: 25px;
    white-space: nowrap;
}

.session-info dd {
    color: #1e78d6;
}

.columns {
    display: flex;
    flex: 1;
    gap: 7px;
    min-height: 0;
}

.student-panel {
    width: 297px;
    padding-bottom: 3px;
    background: #def0fe;
}

.select-all {
    display: flex;
    align-items: center;
    gap: 5px;
    padding: 11px 0 8px 7px;
    line-height: 19px;
}

input[type="checkbox"] {
    appearance: none;
    display: block;
    width: 14px;
    height: 14px;
    border-radius: 3px;
    background: #0063b5 url("data:image/svg+xml,%3Csvg xmlns='http://www.w3.org/2000/svg' viewBox='0 0 14 14'%3E%3Cpath d='M4 7l2 2 4-4' fill='none' stroke='%23d0e8ff'/%3E%3C/svg%3E");
}

.select-all input[type="checkbox"] {
    border: 1px solid #4ba3d8;
    border-radius: 0;
    background: #fff url("data:image/svg+xml,%3Csvg xmlns='http://www.w3.org/2000/svg' viewBox='0 0 14 14'%3E%3Cpath d='M3 7l3 3 5-7' fill='none' stroke='%232f8fd0' stroke-width='2'/%3E%3C/svg%3E");
}

.student-scroll {
    display: flex;
    align-items: flex-start;
    flex: 1;
    min-height: 0;
    margin: 0 7px 0 4px;
    overflow: hidden;
    border: 1px solid #9a9a9a;
    background: #fff;
}

.student-scroll .data-table {
    flex: 1;
}

.data-table th {
    height: 23px;
    padding-right: 19px;
    background: linear-gradient(#f0f2fb, #c5d8f6);
    font-weight: normal;
}

.data-table tbody tr:nth-child(even) td:not(.mark) {
    background: #eff4fa;
}

.grade-panel .data-table {
    border-top: 1px solid #a8a8b0;
    border-left: 1px solid #a8a8b0;
}

.scrollbar {
    display: flex;
    align-self: stretch;
    justify-content: center;
    flex: none;
    width: 18px;
    background: #f0f0f0;
}

.scrollbar span {
    width: 2px;
    margin-top: 18px;
    background: #8a8a8a;
}

.student-thumb {
    height: 125px;
}

.report-thumb {
    height: 108px;
}

.right-column {
    display: flex;
    flex: 1;
    flex-direction: column;
    gap: 8px;
    min-width: 0;
    padding-bottom: 1px;
}

.grade-panel {
    flex: 196 1 0;
}

.reports-panel {
    flex: 188 1 0;
}

.reports-scroll {
    display: flex;
    flex: 1;
    min-height: 0;
}

.report-list {
    display: grid;
    flex: 1;
    grid-template-columns: repeat(6, 87px);
    grid-auto-rows: 77px;
    row-gap: 10px;
    padding-top: 3px;
    overflow: hidden;
}

.report-list button {
    display: flex;
    flex-direction: column;
    align-items: center;
    gap: 7px;
    line-height: 16px;
}

.buttons {
    display: flex;
    flex: none;
    justify-content: flex-end;
    gap: 6px;
    margin-top: 8px;
}

.buttons .glass {
    gap: 15px;
    height: 29px;
    padding: 0 10px 0 3px;
    font-size: 15px;
}

.buttons .save {
    border-color: #9c9c98;
    background: linear-gradient(#e2deda, #c4c0bc 48%, #a8a4a0 52%, #d4d0c8);
}

.buttons .exit {
    gap: 22px;
    padding-right: 18px;
}
```
